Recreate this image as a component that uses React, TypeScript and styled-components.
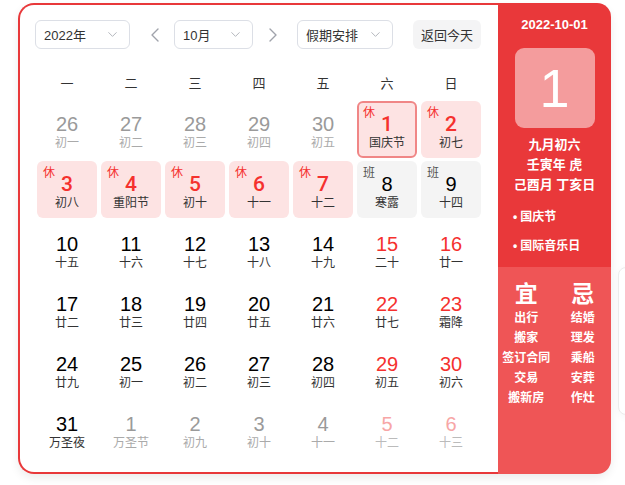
import React from "react";
import styled, { createGlobalStyle, css } from "styled-components";
import { ChevronDown, ChevronLeft, ChevronRight } from "lucide-react";

const GlobalStyle = createGlobalStyle`
    html, body {
        margin: 0;
        padding: 0;
        background: #fff;
        overflow: hidden;
    }
    body {
        font-family: "Liberation Sans", "Noto Sans CJK SC", sans-serif;
        color: #333;
    }
`;

type Kind = "normal" | "weekend" | "other" | "otherWeekend";
type Tag = "rest" | "work" | undefined;

interface Day {
    num: number;
    lunar: string;
    kind: Kind;
    tag?: Tag;
    selected?: boolean;
}

const days: Day[] = [
    { num: 26, lunar: "初一", kind: "other" },
    { num: 27, lunar: "初二", kind: "other" },
    { num: 28, lunar: "初三", kind: "other" },
    { num: 29, lunar: "初四", kind: "other" },
    { num: 30, lunar: "初五", kind: "other" },
    { num: 1, lunar: "国庆节", kind: "weekend", tag: "rest", selected: true },
    { num: 2, lunar: "初七", kind: "weekend", tag: "rest" },

    { num: 3, lunar: "初八", kind: "weekend", tag: "rest" },
    { num: 4, lunar: "重阳节", kind: "weekend", tag: "rest" },
    { num: 5, lunar: "初十", kind: "weekend", tag: "rest" },
    { num: 6, lunar: "十一", kind: "weekend", tag: "rest" },
    { num: 7, lunar: "十二", kind: "weekend", tag: "rest" },
    { num: 8, lunar: "寒露", kind: "normal", tag: "work" },
    { num: 9, lunar: "十四", kind: "normal", tag: "work" },

    { num: 10, lunar: "十五", kind: "normal" },
    { num: 11, lunar: "十六", kind: "normal" },
    { num: 12, lunar: "十七", kind: "normal" },
    { num: 13, lunar: "十八", kind: "normal" },
    { num: 14, lunar: "十九", kind: "normal" },
    { num: 15, lunar: "二十", kind: "weekend" },
    { num: 16, lunar: "廿一", kind: "weekend" },

    { num: 17, lunar: "廿二", kind: "normal" },
    { num: 18, lunar: "廿三", kind: "normal" },
    { num: 19, lunar: "廿四", kind: "normal" },
    { num: 20, lunar: "廿五", kind: "normal" },
    { num: 21, lunar: "廿六", kind: "normal" },
    { num: 22, lunar: "廿七", kind: "weekend" },
    { num: 23, lunar: "霜降", kind: "weekend" },

    { num: 24, lunar: "廿九", kind: "normal" },
    { num: 25, lunar: "初一", kind: "normal" },
    { num: 26, lunar: "初二", kind: "normal" },
    { num: 27, lunar: "初三", kind: "normal" },
    { num: 28, lunar: "初四", kind: "normal" },
    { num: 29, lunar: "初五", kind: "weekend" },
    { num: 30, lunar: "初六", kind: "weekend" },

    { num: 31, lunar: "万圣夜", kind: "normal" },
    { num: 1, lunar: "万圣节", kind: "other" },
    { num: 2, lunar: "初九", kind: "other" },
    { num: 3, lunar: "初十", kind: "other" },
    { num: 4, lunar: "十一", kind: "other" },
    { num: 5, lunar: "十二", kind: "otherWeekend" },
    { num: 6, lunar: "十三", kind: "otherWeekend" },
];

const weekdays = ["一", "二", "三", "四", "五", "六", "日"];
const yi = ["出行", "搬家", "签订合同", "交易", "搬新房"];
const ji = ["结婚", "理发", "乘船", "安葬", "作灶"];

const Page = styled.div`
    display: flex;
    align-items: flex-start;
    width: 625px;
    height: 485px;
    overflow: hidden;
`;

const Wrapper = styled.div`
    display: flex;
    flex-shrink: 0;
    width: 593px;
    height: 471px;
    margin: 3px 0 0 18px;
    border-radius: 16px;
    box-shadow: 0 4px 10px rgba(0, 0, 0, 0.08);
`;

// the edge of another card peeking in at the right of the window
const GhostCard = styled.div`
    flex-shrink: 0;
    width: 40px;
    height: 146px;
    margin: 267px 0 0 7px;
    border: 1px solid #ececec;
    border-radius: 8px;
    background: #fff;
    box-shadow: 0 2px 8px rgba(0, 0, 0, 0.04);
`;

const Main = styled.div`
    box-sizing: border-box;
    width: 480px;
    height: 100%;
    padding: 15px 15px 0 15px;
    border: 2px solid #e8383a;
    border-right: none;
    border-radius: 16px 0 0 16px;
    background: #fff;
`;

const Toolbar = styled.div`
    display: flex;
    align-items: center;
    height: 29px;
    margin-bottom: 18px;
`;

const Select = styled.div<{ $width: number }>`
    box-sizing: border-box;
    display: flex;
    align-items: center;
    justify-content: space-between;
    width: ${(p) => p.$width}px;
    height: 29px;
    padding: 0 9px 0 8px;
    border: 1px solid #dcdfe6;
    border-radius: 6px;
    font-size: 13px;
    color: #333;
`;

const ArrowButton = styled.div<{ $left: number; $right: number }>`
    display: flex;
    align-items: center;
    justify-content: center;
    width: 24px;
    height: 29px;
    margin: 0 ${(p) => p.$right}px 0 ${(p) => p.$left}px;
    color: #a0a3ab;
`;

const TodayButton = styled.div`
    display: flex;
    align-items: center;
    justify-content: center;
    width: 68px;
    height: 29px;
    margin-left: 20px;
    border-radius: 6px;
    background: #f4f4f5;
    font-size: 13px;
    color: #333;
`;

const WeekRow = styled.div`
    display: grid;
    grid-template-columns: repeat(7, 60px);
    column-gap: 4px;
    padding: 0 2px;
    height: 30px;
    margin-bottom: 4px;

    & > div {
        display: flex;
        align-items: center;
        justify-content: center;
        font-size: 13px;
        color: #333;
    }
`;

const Grid = styled.div`
    display: grid;
    grid-template-columns: repeat(7, 60px);
    grid-auto-rows: 57px;
    column-gap: 4px;
    row-gap: 3px;
    padding: 0 2px;
`;

const numberColor: Record<Kind, string> = {
    normal: "#000",
    weekend: "#f5312e",
    other: "#9a9a9a",
    otherWeekend: "#f7a6a6",
};

const lunarColor: Record<Kind, string> = {
    normal: "#333",
    weekend: "#333",
    other: "#aaa",
    otherWeekend: "#bbb",
};

const Cell = styled.div<{ $tag: Tag; $selected?: boolean }>`
    position: relative;
    box-sizing: border-box;
    display: flex;
    flex-direction: column;
    align-items: center;
    padding-top: 12px;
    border-radius: 6px;

    ${(p) =>
        p.$tag === "rest" &&
        css`
            background: #fde3e3;
        `}
    ${(p) =>
        p.$tag === "work" &&
        css`
            background: #f4f4f4;
        `}
    ${(p) =>
        p.$selected &&
        css`
            border: 2px solid #f08686;
            padding-top: 10px;
        `}
`;

const Num = styled.div<{ $kind: Kind; $medium?: boolean }>`
    font-size: 20px;
    line-height: 22px;
    color: ${(p) => numberColor[p.$kind]};

    ${(p) =>
        p.$medium &&
        css`
            font-family: Roboto, "Liberation Sans", sans-serif;
            font-weight: 500;
            font-size: 21px;
        `}
`;

const Lunar = styled.div<{ $kind: Kind; $dark?: boolean }>`
    font-size: 12px;
    line-height: 16px;
    color: ${(p) => (p.$dark ? "#333" : lunarColor[p.$kind])};
`;

const TagLabel = styled.span<{ $tag: Tag; $selected?: boolean }>`
    position: absolute;
    top: ${(p) => (p.$selected ? 2 : 4)}px;
    left: ${(p) => (p.$selected ? 4 : 6)}px;
    font-size: 12px;
    line-height: 16px;
    color: ${(p) => (p.$tag === "rest" ? "#f5312e" : "#555")};
`;

const Side = styled.div`
    display: flex;
    flex-direction: column;
    width: 113px;
    height: 100%;
    border-radius: 0 14px 14px 0;
    overflow: hidden;
    color: #fff;
    font-weight: 700;
`;

const SideTop = styled.div`
    display: flex;
    flex-direction: column;
    align-items: center;
    height: 264px;
    padding-top: 14px;
    box-sizing: border-box;
    background: #e9383a;
`;

const DateText = styled.div`
    font-size: 13px;
    line-height: 16px;
`;

const BigDay = styled.div`
    display: flex;
    align-items: center;
    justify-content: center;
    width: 80px;
    height: 80px;
    margin-top: 15px;
    margin-bottom: 7px;
    border-radius: 9px;
    background: rgba(255, 255, 255, 0.5);
    font-size: 54px;
    font-weight: 400;
`;

const LunarLine = styled.div`
    font-size: 13px;
    line-height: 20px;
`;

const Festivals = styled.ul`
    align-self: stretch;
    list-style: none;
    margin: 12px 0 0 0;
    padding: 0 0 0 15px;
    display: flex;
    flex-direction: column;
    gap: 9px;

    & > li {
        font-size: 12px;
        line-height: 20px;
    }

    & > li::before {
        content: "•";
        margin-right: 3px;
    }
`;

const SideBottom = styled.div`
    flex: 1;
    display: grid;
    grid-template-columns: 1fr 1fr;
    padding-top: 13px;
    background: #ef5556;
`;

const Column = styled.div`
    display: flex;
    flex-direction: column;
    align-items: center;
`;

const ColumnTitle = styled.div`
    font-size: 23px;
    line-height: 28px;
    font-weight: 700;
`;

const ColumnItem = styled.div`
    font-size: 12px;
    line-height: 20px;
    white-space: nowrap;
`;

const App: React.FC = () => {
    return (
        <Page>
            <GlobalStyle />
            <Wrapper>
                <Main>
                    <Toolbar>
                        <Select $width={95}>
                            2022年
                            <ChevronDown size={15} strokeWidth={1.4} color="#a8abb2" />
                        </Select>
                        <ArrowButton $left={13} $right={7}>
                            <ChevronLeft size={24} strokeWidth={1.4} />
                        </ArrowButton>
                        <Select $width={79}>
                            10月
                            <ChevronDown size={15} strokeWidth={1.4} color="#a8abb2" />
                        </Select>
                        <ArrowButton $left={8} $right={12}>
                            <ChevronRight size={24} strokeWidth={1.4} />
                        </ArrowButton>
                        <Select $width={96}>
                            假期安排
                            <ChevronDown size={15} strokeWidth={1.4} color="#a8abb2" />
                        </Select>
                        <TodayButton>返回今天</TodayButton>
                    </Toolbar>

                    <WeekRow>
                        {weekdays.map((w) => (
                            <div key={w}>{w}</div>
                        ))}
                    </WeekRow>

                    <Grid>
                        {days.map((d, i) => (
                            <Cell key={i} $tag={d.tag} $selected={d.selected}>
                                {d.tag && (
                                    <TagLabel $tag={d.tag} $selected={d.selected}>
                                        {d.tag === "rest" ? "休" : "班"}
                                    </TagLabel>
                                )}
                                <Num $kind={d.kind} $medium={d.tag === "rest"}>
                                    {d.num}
                                </Num>
                                <Lunar $kind={d.kind} $dark={d.tag !== undefined}>
                                    {d.lunar}
                                </Lunar>
                            </Cell>
                        ))}
                    </Grid>
                </Main>

                <Side>
                    <SideTop>
                        <DateText>2022-10-01</DateText>
                        <BigDay>1</BigDay>
                        <LunarLine>九月初六</LunarLine>
                        <LunarLine>壬寅年 虎</LunarLine>
                        <LunarLine>己酉月 丁亥日</LunarLine>
                        <Festivals>
                            <li>国庆节</li>
                            <li>国际音乐日</li>
                        </Festivals>
                    </SideTop>
                    <SideBottom>
                        <Column>
                            <ColumnTitle>宜</ColumnTitle>
                            {yi.map((t) => (
                                <ColumnItem key={t}>{t}</ColumnItem>
                            ))}
                        </Column>
                        <Column>
                            <ColumnTitle>忌</ColumnTitle>
                            {ji.map((t) => (
                                <ColumnItem key={t}>{t}</ColumnItem>
                            ))}
                        </Column>
                    </SideBottom>
                </Side>
            </Wrapper>
            <GhostCard />
        </Page>
    );
};

export default App;
